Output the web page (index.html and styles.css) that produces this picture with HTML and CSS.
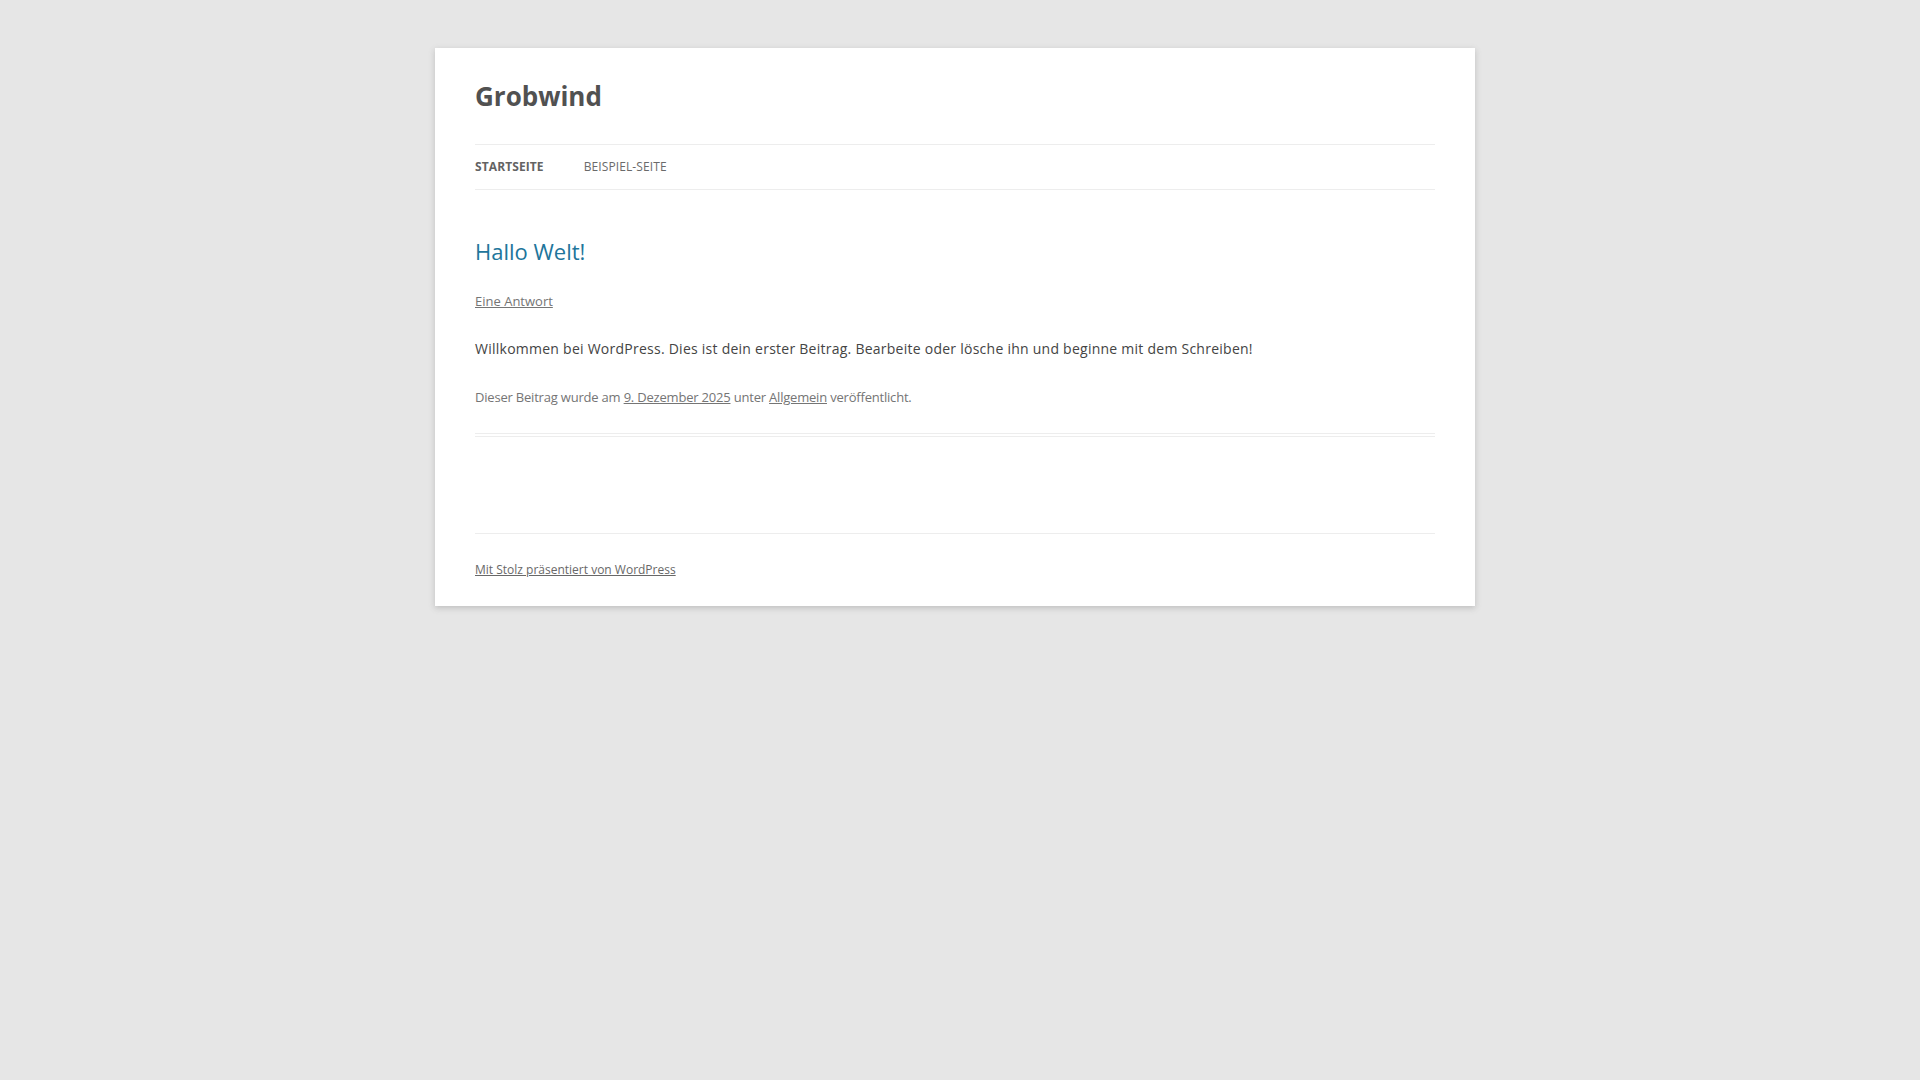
FILE: index.html
```html
<!DOCTYPE html>
<html lang="de">
<head>
<meta charset="utf-8">
<title>Grobwind</title>
<link rel="stylesheet" href="styles.css">
</head>
<body>
<div class="site">
  <header class="site-header">
    <h1 class="site-title"><a href="#">Grobwind</a></h1>
    <nav class="main-navigation">
      <ul class="nav-menu">
        <li class="current-menu-item"><a href="#">Startseite</a></li>
        <li><a href="#">Beispiel-Seite</a></li>
      </ul>
    </nav>
  </header>
  <main class="site-content">
    <article class="post">
      <header class="entry-header">
        <h1 class="entry-title"><a href="#">Hallo Welt!</a></h1>
        <div class="comments-link"><a href="#">Eine Antwort</a></div>
      </header>
      <div class="entry-content">
        <p>Willkommen bei WordPress. Dies ist dein erster Beitrag. Bearbeite oder lösche ihn und beginne mit dem Schreiben!</p>
      </div>
      <footer class="entry-meta">Dieser Beitrag wurde am <a href="#">9. Dezember 2025</a> unter <a href="#">Allgemein</a> veröffentlicht.</footer>
    </article>
  </main>
  <footer class="site-footer">
    <a href="#">Mit Stolz präsentiert von WordPress</a>
  </footer>
</div>
</body>
</html>
```

FILE: styles.css
```css
html {
  font-size: 14px;
}
body {
  margin: 0;
  padding: 0 10px 0 0;
  background-color: #e6e6e6;
  color: #444;
  font-family: "Open Sans", "Liberation Sans", Arial, sans-serif;
  font-size: 14px;
  line-height: 1.714285714;
}
a {
  color: #21759b;
}
h1, p, ul {
  margin: 0;
  padding: 0;
}
.site {
  max-width: 960px;
  margin: 48px auto;
  padding: 0 40px;
  background-color: #fff;
  box-shadow: 0 2px 6px rgba(100, 100, 100, 0.3);
}
.site-header {
  padding: 24px 0;
}
.site-title {
  font-size: 26px;
  line-height: 1.846153846;
  font-weight: bold;
  margin-bottom: 24px;
}
.site-title a {
  color: #515151;
  text-decoration: none;
  display: inline-block;
}
.nav-menu {
  list-style: none;
  display: flex;
  border-top: 1px solid #ededed;
  border-bottom: 1px solid #ededed;
}
.nav-menu li {
  margin-right: 40px;
  font-size: 12px;
}
.nav-menu li a {
  display: block;
  color: #6a6a6a;
  line-height: 3.692307692;
  text-transform: uppercase;
  text-decoration: none;
  white-space: nowrap;
  letter-spacing: 0.1px;
}
.nav-menu .current-menu-item a {
  color: #636363;
  font-weight: bold;
}
.site-content {
  margin-top: 24px;
  display: flow-root;
}
.post {
  border-bottom: 4px double #ededed;
  margin-bottom: 72px;
  padding-bottom: 24px;
}
.entry-header {
  margin-bottom: 24px;
}
.entry-title {
  font-size: 22px;
  line-height: 27px;
  font-weight: normal;
}
.entry-title a {
  color: #21759b;
  text-decoration: none;
}
.comments-link {
  margin-top: 24px;
  font-size: 13px;
  line-height: 1.846153846;
  color: #757575;
}
.comments-link a,
.entry-meta a {
  color: #757575;
}
.entry-content p {
  margin: 0 0 24px;
  line-height: 1.714285714;
  letter-spacing: 0.25px;
}
.entry-meta {
  font-size: 13px;
  line-height: 1.846153846;
  color: #757575;
  letter-spacing: -0.2px;
}
.site-footer {
  border-top: 1px solid #ededed;
  margin-top: 24px;
  padding: 24px 0;
  font-size: 12px;
  line-height: 2;
}
.site-footer a {
  color: #686868;
}
```
